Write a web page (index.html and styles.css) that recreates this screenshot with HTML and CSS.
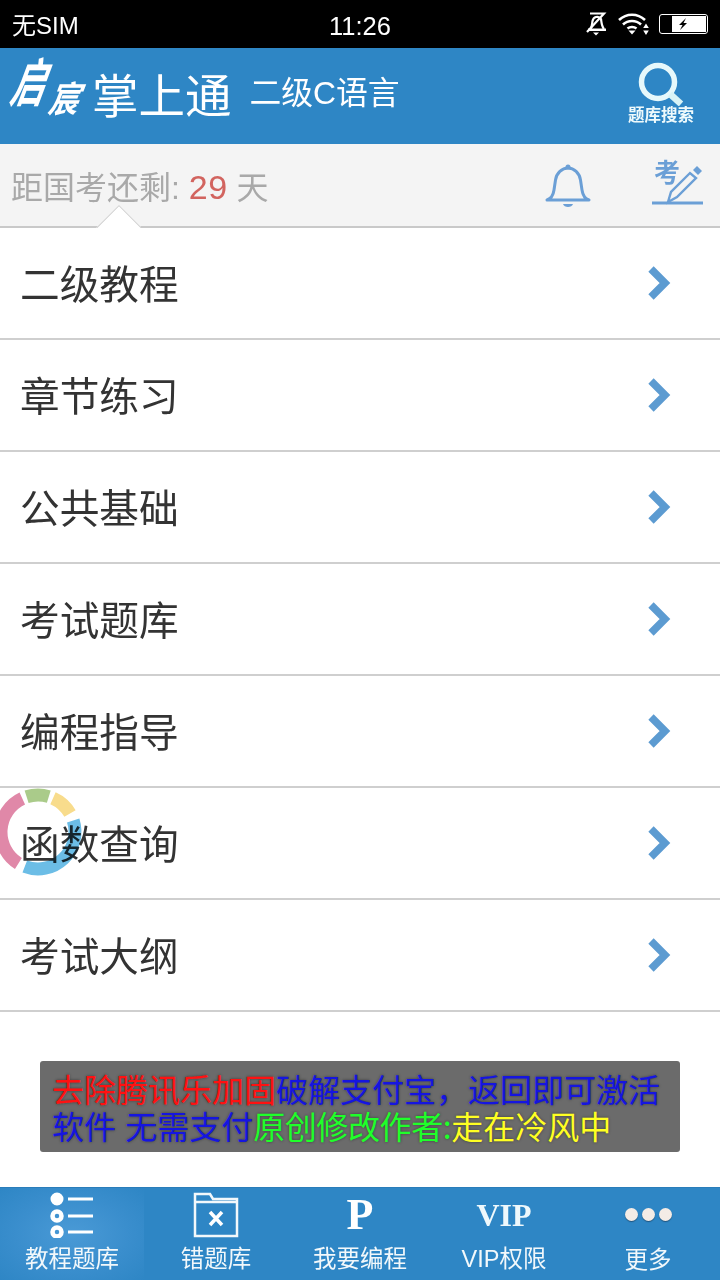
FILE: index.html
```html
<!DOCTYPE html>
<html lang="zh">
<head>
<meta charset="utf-8">
<title>掌上通</title>
<link rel="stylesheet" href="styles.css">
</head>
<body>
<div class="app">
  <div class="status">
    <span class="carrier">无SIM</span>
    <span class="clock">11:26</span>
    <div class="status-icons">
      <svg class="ic-mute" viewBox="0 0 22 24" width="22" height="24"><path d="M5.500 17c1.500-2 1.500-5 2-8 .5-2 1.500-3.500 3.500-4 2-.5 4 .5 5 2 .5 3 .5 7 3 10" fill="none" stroke="#fff" stroke-width="2.200"/><path d="M3 16.500h18v2.500H3z" fill="#fff"/><path d="M8 20.500h6l-3 3z" fill="#fff"/><path d="M5 1.500h14L2 20" fill="none" stroke="#fff" stroke-width="2.200"/></svg>
      <svg class="ic-wifi" viewBox="0 0 32 24" width="32" height="24"><path d="M1 8c7.500-7 18.500-7 26 0M5 12.500c5-4.700 13-4.700 18 0M9.500 16.500c2.500-2 6.500-2 9 0" fill="none" stroke="#fff" stroke-width="2.600"/><path d="M10.500 18.500h7L14 22.500zM28 11.500l2.800 4.500h-5.600zM28 23l2.800-4.500h-5.600z" fill="#fff"/></svg>
      <div class="battery"><div class="battery-fill"><svg viewBox="0 0 12 14" width="12" height="14"><path d="M9 1 2 8h3.500L3 13l7-7H6.500z" fill="#000"/></svg></div></div>
    </div>
  </div>

  <header class="top">
    <div class="brand">
      <span class="logo"><span class="logo-a">启</span><span class="logo-b">宸</span></span>
      <span class="app-name">掌上通</span>
      <span class="subject">二级C语言</span>
    </div>
    <div class="search">
      <svg viewBox="0 0 46 44" width="46" height="44"><circle cx="20" cy="20" r="16.500" fill="none" stroke="#e6f8fb" stroke-width="5.500"/><path d="M32 32 43 42" stroke="#d8f3f6" stroke-width="6.500"/></svg>
      <span class="search-label">题库搜索</span>
    </div>
  </header>

  <div class="countdown">
    <div class="count-text">距国考还剩: <em>29</em> 天</div>
    <div class="count-icons">
      <svg viewBox="0 0 48 46" width="48" height="46"><path d="M3 38c3-1 6-3 7-10l1.500-10c1-7 6.500-12 12.500-12s11.500 5 12.500 12L38 28c1 7 4 9 7 10z" fill="none" stroke="#6b9fd6" stroke-width="3" stroke-linejoin="round"/><circle cx="24" cy="5" r="2.500" fill="#6b9fd6"/><path d="M19 42h10c-1 4-9 4-10 0z" fill="#6b9fd6"/></svg>
      <div class="exam">
        <span class="exam-char">考</span>
        <svg viewBox="0 0 52 46" width="52" height="46"><path d="M16 40 19 30 38 11l6 5-19 19z" fill="none" stroke="#6b9fd6" stroke-width="2.400"/><path d="M41 8l4-4 5 5-4 4z" fill="#6b9fd6"/><path d="M0 41h51" stroke="#6b9fd6" stroke-width="2.800"/></svg>
      </div>
    </div>
    <div class="notch"></div>
  </div>

  <ul class="menu">
    <li class="row"><span>二级教程</span><svg class="chev" viewBox="0 0 24 36" width="24" height="36"><path d="M4 4 18 18 4 32" fill="none" stroke="#5c9bd1" stroke-width="7.500"/></svg></li>
    <li class="row"><span>章节练习</span><svg class="chev" viewBox="0 0 24 36" width="24" height="36"><path d="M4 4 18 18 4 32" fill="none" stroke="#5c9bd1" stroke-width="7.500"/></svg></li>
    <li class="row"><span>公共基础</span><svg class="chev" viewBox="0 0 24 36" width="24" height="36"><path d="M4 4 18 18 4 32" fill="none" stroke="#5c9bd1" stroke-width="7.500"/></svg></li>
    <li class="row"><span>考试题库</span><svg class="chev" viewBox="0 0 24 36" width="24" height="36"><path d="M4 4 18 18 4 32" fill="none" stroke="#5c9bd1" stroke-width="7.500"/></svg></li>
    <li class="row"><span>编程指导</span><svg class="chev" viewBox="0 0 24 36" width="24" height="36"><path d="M4 4 18 18 4 32" fill="none" stroke="#5c9bd1" stroke-width="7.500"/></svg></li>
    <li class="row"><span>函数查询</span><svg class="chev" viewBox="0 0 24 36" width="24" height="36"><path d="M4 4 18 18 4 32" fill="none" stroke="#5c9bd1" stroke-width="7.500"/></svg></li>
    <li class="row"><span>考试大纲</span><svg class="chev" viewBox="0 0 24 36" width="24" height="36"><path d="M4 4 18 18 4 32" fill="none" stroke="#5c9bd1" stroke-width="7.500"/></svg></li>
  </ul>

  <svg class="float-ring" viewBox="0 0 100 100" width="100" height="100">
    <g fill="none" stroke-width="13">
      <path d="M34.300 16.500A37 37 0 0 0 30.400 81.400" stroke="#e088a8"/>
      <path d="M38.600 14.800A37 37 0 0 1 60.800 14.600" stroke="#aacb8a"/>
      <path d="M65 16.200A37 37 0 0 1 82 31.500" stroke="#f8dc8c"/>
      <path d="M85.200 38.600A37 37 0 0 1 36.800 84.500" stroke="#6cbde6"/>
    </g>
  </svg>

  <div class="toast">
    <div class="toast-line"><span class="t-red">去除腾讯乐加固</span><span class="t-blue">破解支付宝，返回即可激活</span></div>
    <div class="toast-line"><span class="t-blue t-words">软件 无需支付</span><span class="t-green">原创修改作者:</span><span class="t-yellow">走在冷风中</span></div>
  </div>

  <nav class="tabs">
    <div class="tab active">
      <svg class="tab-icon" viewBox="0 0 48 46" width="48" height="46"><g fill="none" stroke="#fff"><circle cx="9" cy="7" r="5.500" fill="#fff" stroke-width="2"/><circle cx="9" cy="24" r="4.500" stroke-width="4.500"/><circle cx="9" cy="40" r="4.500" stroke-width="4.500"/><path d="M20 7h25M20 24h25M20 40h25" stroke-width="3"/></g></svg>
      <span>教程题库</span>
    </div>
    <div class="tab">
      <svg class="tab-icon" viewBox="0 0 48 46" width="48" height="46"><path d="M3 44V2h15l3 5h24v37zM3 10h42" fill="none" stroke="#f2f8fb" stroke-width="2.500"/><path d="M18 20l12 13M30 20 18 33" stroke="#fff" stroke-width="3.500"/></svg>
      <span>错题库</span>
    </div>
    <div class="tab">
      <div class="tab-glyph">P</div>
      <span>我要编程</span>
    </div>
    <div class="tab">
      <div class="tab-glyph vip">VIP</div>
      <span>VIP权限</span>
    </div>
    <div class="tab">
      <div class="dots"><i></i><i></i><i></i></div>
      <span class="more">更多</span>
    </div>
  </nav>
</div>
</body>
</html>
```
FILE: styles.css
```css
* { box-sizing: border-box; }
html, body { margin: 0; padding: 0; }
body { font-family: "Liberation Sans", "Noto Sans CJK SC", sans-serif; background: #fff; }
.app { position: relative; width: 720px; height: 1280px; overflow: hidden; display: flex; flex-direction: column; }

.status { height: 48px; background: #000; color: #fff; position: relative; display: flex; align-items: center; justify-content: space-between; padding: 0 12px 0 12px; font-size: 24px; }
.carrier { line-height: 28px; margin-top: 3px; }
.clock { position: absolute; left: 329px; top: 10px; font-size: 25.500px; line-height: 32px; }
.status-icons { display: flex; align-items: center; gap: 9px; margin-bottom: 1px; }
.ic-mute { margin-right: 2px; }
.battery { width: 49px; height: 20px; border: 1.500px solid #fff; border-radius: 3px; display: flex; justify-content: flex-end; padding: 1px; }
.battery-fill { width: 34px; background: #fff; display: flex; justify-content: flex-start; align-items: center; padding-left: 5px; }

.top { height: 96px; background: #2e86c5; display: flex; justify-content: space-between; color: #fff; padding-right: 24px; }
.brand { display: flex; align-items: flex-start; }
.logo { position: relative; width: 72px; height: 66px; margin-left: 10px; margin-top: 3px; font-family: "Noto Sans CJK SC", sans-serif; font-weight: 700; font-style: italic; white-space: nowrap; }
.logo-a { position: absolute; left: 3px; top: 4px; font-size: 34px; line-height: 50px; transform: skewX(-12deg) scaleY(1.55); }
.logo-b { position: absolute; left: 40px; top: 26px; font-size: 30px; line-height: 38px; transform: skewX(-10deg) scaleY(1.2); }
.app-name { margin-left: 10px; margin-top: 19px; font-family: "Noto Sans CJK SC", sans-serif; font-size: 46.500px; line-height: 52px; }
.subject { margin-left: 18px; margin-top: 25px; font-size: 31.800px; line-height: 40px; }
.search { width: 70px; display: flex; flex-direction: column; align-items: center; padding-top: 14px; }
.search svg { display: block; }
.search-label { font-size: 16.500px; line-height: 18px; font-weight: 700; white-space: nowrap; color: #eefafc; }

.countdown { position: relative; height: 84px; background: #f4f4f4; border-bottom: 2px solid #c9c9c9; display: flex; justify-content: space-between; align-items: center; padding: 0 16px 0 11px; }
.count-text { font-size: 32px; color: #a9a9a9; line-height: 40px; margin-top: 4px; }
.count-text em { font-style: normal; font-size: 34px; color: #d2645f; letter-spacing: .5px; }
.count-icons { display: flex; align-items: center; gap: 60px; }
.exam { position: relative; width: 52px; height: 46px; }
.exam svg { display: block; }
.exam-char { position: absolute; left: 2px; top: -4px; font-size: 26px; line-height: 30px; font-weight: 700; color: #6b9fd6; }
.notch { position: absolute; left: 95px; bottom: -2px; width: 46px; height: 24px; overflow: hidden; }
.notch::before { content: ""; position: absolute; left: 7px; top: 8px; width: 32px; height: 32px; background: #fff; border: 1px solid #cfcfcf; transform: rotate(45deg); }

.menu { list-style: none; margin: 0; padding: 0; }
.row { height: 112px; border-bottom: 2px solid #cfcfcf; display: flex; align-items: center; justify-content: space-between; padding: 0 49px 4px 20px; font-size: 39.700px; color: #333; font-family: "Noto Sans CJK SC", sans-serif; font-weight: 400; }
.chev { display: block; margin-top: 4px; }

.float-ring { position: absolute; left: -12px; top: 782px; mix-blend-mode: multiply; }

.toast { position: absolute; left: 40px; top: 1061px; width: 640px; height: 91px; background: #6b6b6b; border-radius: 3px; padding: 9px 12px; font-family: "Noto Sans CJK SC", sans-serif; font-size: 32px; line-height: 37px; text-shadow: 0 0 3px rgba(0, 0, 0, .45); white-space: nowrap; }
.toast-line { height: 37px; display: flex; }
.t-red { color: #ff1111; }
.t-blue { color: #1515e0; }
.t-words { word-spacing: 2px; white-space: pre; }
.t-green { color: #1fff2a; letter-spacing: -.4px; }
.t-yellow { color: #ffff22; }

.tabs { position: absolute; left: 0; right: 0; bottom: 0; height: 93px; background: #2e86c5; display: grid; grid-template-columns: repeat(5, 144px); color: #f2f8fb; border-top: 1px solid #2a7dba; }
.tab { display: flex; flex-direction: column; align-items: center; font-size: 23.500px; line-height: 30px; padding-top: 4px; }
.tab.active { background: radial-gradient(ellipse at center, #4a9ad6 0%, #3a8ecd 55%, #2e86c5 100%); }
.tab-icon { display: block; margin-bottom: 6px; }
.tab-glyph { height: 46px; margin-bottom: 6px; font-family: "Liberation Serif", serif; font-weight: 700; font-size: 44px; line-height: 46px; color: #fff; }
.tab-glyph.vip { font-size: 32px; line-height: 46px; color: #eef8fc; }
.dots { height: 46px; display: flex; gap: 4px; align-items: center; margin-bottom: 6px; padding-bottom: 2px; }
.dots i { display: block; width: 13px; height: 13px; border-radius: 50%; background: #f4ece6; box-shadow: 0 1px 1px #20557f; }
.more { margin-top: 1px; }
```
